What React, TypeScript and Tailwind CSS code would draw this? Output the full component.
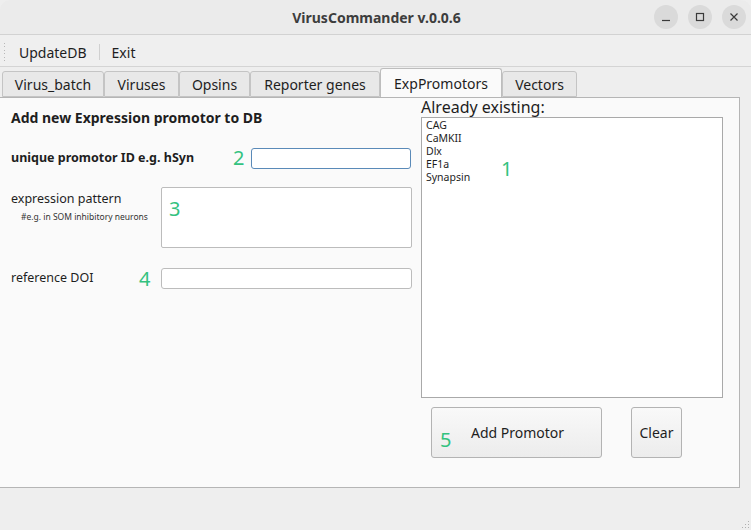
import React from "react";

const F = { fontFamily: '"Noto Sans", "Open Sans", sans-serif' };

function Tab({ label, active, w }: { label: string; active?: boolean; w: string }) {
  return (
    <div
      className={
        active
          ? `${w} h-[29px] mt-0 bg-[#fafafa] border border-b-0 border-[#bdbdbd] rounded-t-[3px] flex items-center justify-center text-[14px] text-[#1e1e1e] relative z-10 -mb-px`
          : `${w} h-[26px] mt-[3px] bg-[#e8e8e8] border border-[#c4c4c4] rounded-t-[3px] flex items-center justify-center text-[14px] text-[#1e1e1e]`
      }
    >
      {label}
    </div>
  );
}

export default function App() {
  return (
    <div className="w-[751px] h-[530px] bg-[#eeeeee] flex flex-col overflow-hidden text-[#1e1e1e]" style={F}>
      {/* title bar */}
      <div className="h-[35px] bg-[#ebebeb] border-b border-[#d2d2d2] flex items-center relative rounded-t-[10px]">
        <div className="flex-1 text-center font-bold text-[14px] text-[#3d3d3d] pl-[2px]">VirusCommander v.0.0.6</div>
        <div className="absolute right-[5px] top-[5px] flex gap-[10px]">
          <div className="w-[24px] h-[24px] rounded-full bg-[#dadada] flex items-center justify-center">
            <svg width="10" height="10" viewBox="0 0 10 10"><line x1="1" y1="8.5" x2="9" y2="8.5" stroke="#3a3a3a" strokeWidth="1.2" /></svg>
          </div>
          <div className="w-[24px] h-[24px] rounded-full bg-[#dadada] flex items-center justify-center">
            <svg width="10" height="10" viewBox="0 0 10 10"><rect x="1.5" y="1.5" width="7" height="7" fill="none" stroke="#3a3a3a" strokeWidth="1.2" /></svg>
          </div>
          <div className="w-[24px] h-[24px] rounded-full bg-[#dadada] flex items-center justify-center">
            <svg width="10" height="10" viewBox="0 0 10 10"><path d="M1.5 1.5 L8.5 8.5 M8.5 1.5 L1.5 8.5" stroke="#3a3a3a" strokeWidth="1.2" /></svg>
          </div>
        </div>
      </div>
      {/* menu bar */}
      <div className="h-[32px] bg-[#efefef] border-b border-[#d4d4d4] flex items-center text-[14px] pt-[3px]">
        <div className="ml-[4px] h-[18px] w-[3px] flex flex-col justify-between">
          {Array.from({ length: 6 }).map((_, i) => (
            <div key={i} className="w-[1px] h-[1px] bg-[#b8b8b8]" />
          ))}
        </div>
        <div className="ml-[12px]">UpdateDB</div>
        <div className="ml-[12px] w-px h-[16px] bg-[#d0d0d0]" />
        <div className="ml-[12px]">Exit</div>
      </div>
      {/* tabs */}
      <div className="flex pl-[2px] mt-[1px] h-[29px] items-start">
        <Tab label="Virus_batch" w="w-[102px]" />
        <Tab label="Viruses" w="w-[75px]" />
        <Tab label="Opsins" w="w-[71px]" />
        <Tab label="Reporter genes" w="w-[130px]" />
        <Tab label="ExpPromotors" w="w-[122px]" active />
        <Tab label="Vectors" w="w-[75px]" />
      </div>
      {/* panel */}
      <div className="w-[740px] h-[391px] bg-[#fafafa] border border-[#b5b5b5] border-l-0 flex">
        {/* left */}
        <div className="w-[421px] pl-[11px] flex flex-col">
          <div className="mt-[10px] font-bold text-[14px] leading-[20px]">Add new Expression promotor to DB</div>
          <div className="mt-[20px] flex items-center h-[20px]">
            <div className="w-[222px] font-bold text-[12.5px]">unique promotor ID e.g. hSyn</div>
            <div className="w-[18px] text-[20px] text-[#33c27f] leading-none">2</div>
            <div className="w-[160px] h-[21px] bg-white border border-[#5a8ab8] rounded-[3px]" />
          </div>
          <div className="mt-[19px] flex">
            <div className="w-[150px] pt-[4px]">
              <div className="text-[12.5px] leading-[16px]">expression pattern</div>
              <div className="text-[8.5px] pl-[10px] mt-[4px] text-[#333]">#e.g. in SOM inhibitory neurons</div>
            </div>
            <div className="w-[251px] h-[61px] bg-white border border-[#bcbcbc] rounded-[2px] pl-[7px] pt-[11px] text-[20px] leading-none text-[#33c27f]">3</div>
          </div>
          <div className="mt-[20px] flex items-center h-[21px]">
            <div className="w-[128px] text-[12.5px]">reference DOI</div>
            <div className="w-[22px] text-[20px] text-[#33c27f] leading-none">4</div>
            <div className="w-[251px] h-[21px] bg-white border border-[#bcbcbc] rounded-[3px]" />
          </div>
        </div>
        {/* right */}
        <div className="flex flex-col">
          <div className="text-[16px] leading-[19px]">Already existing:</div>
          <div className="w-[302px] h-[281px] bg-white border border-[#a9a9a9] pl-[4px] pt-px relative">
            {["CAG", "CaMKII", "Dlx", "EF1a", "Synapsin"].map((s) => (
              <div key={s} className="text-[10.5px] leading-[13px]">{s}</div>
            ))}
            <div className="absolute left-[79px] top-[41px] text-[20px] leading-none text-[#33c27f]">1</div>
          </div>
          <div className="flex mt-[9px] ml-[10px]">
            <div className="relative w-[171px] h-[51px] rounded-[3px] border border-[#b3b3b3] bg-gradient-to-b from-[#f9f9f9] to-[#ececec] flex items-center justify-center text-[14px]">
              <span className="pl-[2px]">Add Promotor</span>
              <span className="absolute left-[8px] top-[22px] text-[20px] leading-none text-[#33c27f]">5</span>
            </div>
            <div className="ml-[29px] w-[51px] h-[51px] rounded-[3px] border border-[#b3b3b3] bg-gradient-to-b from-[#f9f9f9] to-[#ececec] flex items-center justify-center text-[14px]">
              <span>Clear</span>
            </div>
          </div>
        </div>
      </div>
      <div className="flex-1 relative">
        <div className="absolute right-[2px] bottom-[2px] grid grid-cols-3 gap-[2px]">
          {[0, 0, 1, 0, 1, 1, 1, 1, 1].map((v, i) => (
            <div key={i} className={v ? "w-[1px] h-[1px] bg-[#b0b0b0]" : "w-[1px] h-[1px]"} />
          ))}
        </div>
      </div>
    </div>
  );
}
